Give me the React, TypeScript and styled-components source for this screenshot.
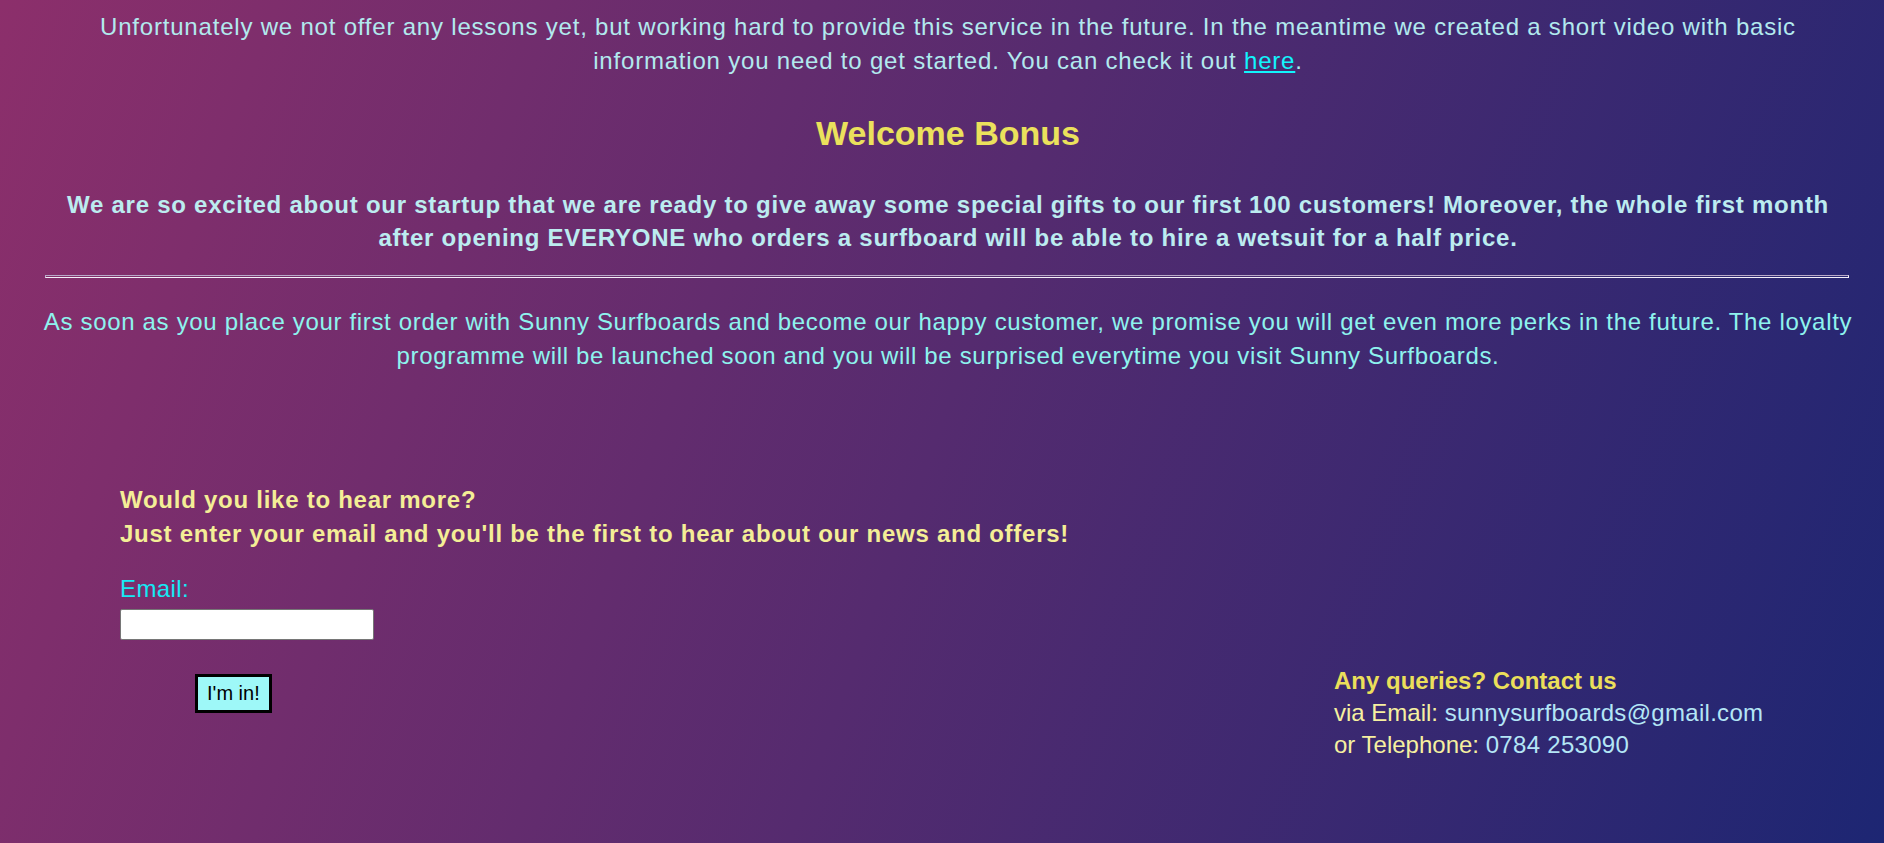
import React from "react";
import styled, { createGlobalStyle } from "styled-components";

const GlobalStyle = createGlobalStyle`
  html, body {
    margin: 0;
    padding: 0;
  }
  body {
    font-family: "Comic Sans MS", "Liberation Sans", Arial, sans-serif;
    background: #1d2673;
  }
`;

const Page = styled.main`
  min-height: 100vh;
  box-sizing: border-box;
  padding: 10px 30px 40px 42px;
  background: linear-gradient(110deg, #8c2f6b 0%, #552b6f 50%, #1d2673 100%);
  font-family: "Comic Sans MS", "Liberation Sans", Arial, sans-serif;
`;

const Paragraph = styled.p<{ $tone: "soft" | "aqua"; $gap?: number }>`
  margin: ${(p) => p.$gap ?? 0}px 0 0;
  font-size: 24px;
  line-height: 33.6px;
  letter-spacing: ${(p) => (p.$tone === "soft" ? 0.8 : 0.67)}px;
  text-align: center;
  color: ${(p) => (p.$tone === "soft" ? "#b2e9ee" : "#8ef3ee")};
`;

const Link = styled.a`
  color: #12f4fc;
  text-decoration: underline;
`;

const Heading = styled.h2`
  margin: 33px 0 0;
  font-size: 34px;
  line-height: 47.6px;
  font-weight: 700;
  text-align: center;
  color: #ebe15c;
`;

const Lead = styled.p`
  margin: 30px 0 0;
  font-size: 24px;
  line-height: 33.6px;
  font-weight: 700;
  letter-spacing: 0.75px;
  text-align: center;
  color: #bcecf0;
`;

const Divider = styled.hr`
  margin: 20px 5px 0 3px;
  height: 1px;
  border-style: solid;
  border-width: 1px;
  border-color: #b9aac8 #f4f0f8 #f4f0f8 #b9aac8;
  background: transparent;
`;

const Footer = styled.section`
  margin-top: 111px;
  padding-left: 78px;
  display: grid;
  grid-template-columns: 1214px auto;
  align-items: start;
`;

const SignupForm = styled.form`
  display: flex;
  flex-direction: column;
  align-items: flex-start;
`;

const Invite = styled.p`
  margin: 0;
  font-size: 24px;
  line-height: 33.6px;
  font-weight: 700;
  letter-spacing: 0.74px;
  color: #f4ee96;
`;

const Label = styled.label`
  margin-top: 22px;
  font-size: 24px;
  line-height: 33.6px;
  letter-spacing: 0.4px;
  color: #14e9f4;
`;

const EmailInput = styled.input`
  margin-top: 3px;
  width: 254px;
  height: 31px;
  box-sizing: border-box;
  border: 1px solid #767676;
  border-radius: 2px;
  background: #ffffff;
  padding: 0 4px;
`;

const SubmitButton = styled.button`
  margin: 34px 0 0 75px;
  height: 39px;
  box-sizing: border-box;
  padding: 0 9px;
  border: 3px solid #000000;
  border-radius: 0;
  background: #9ef8f8;
  color: #000000;
  font-family: "Liberation Sans", Arial, sans-serif;
  font-size: 20px;
  line-height: 23px;
  cursor: pointer;
`;

const Contact = styled.address`
  padding-top: 182px;
  font-style: normal;
  font-size: 24px;
  line-height: 32px;
  display: flex;
  flex-direction: column;
  white-space: nowrap;
`;

const ContactTitle = styled.strong`
  color: #ebdf5a;
  font-weight: 700;
`;

const ContactLine = styled.span`
  color: #f6f0a0;
`;

const ContactValue = styled.span`
  color: #b4e6f6;
  letter-spacing: 0.3px;
`;

export default function App() {
  return (
    <>
      <GlobalStyle />
      <Page>
        <Paragraph $tone="soft">
          Unfortunately we not offer any lessons yet, but working hard to provide this service in the future. In the
          meantime we created a short video with basic information you need to get started. You can check it out{" "}
          <Link href="#">here</Link>.
        </Paragraph>
        <Heading>Welcome Bonus</Heading>
        <Lead>
          We are so excited about our startup that we are ready to give away some special gifts to our first 100
          customers! Moreover, the whole first month after opening EVERYONE who orders a surfboard will be able to hire
          a wetsuit for a half price.
        </Lead>
        <Divider />
        <Paragraph $tone="aqua" $gap={27}>
          As soon as you place your first order with Sunny Surfboards and become our happy customer, we promise you will
          get even more perks in the future. The loyalty programme will be launched soon and you will be surprised
          everytime you visit Sunny Surfboards.
        </Paragraph>
        <Footer>
          <SignupForm onSubmit={(e) => e.preventDefault()}>
            <Invite>
              Would you like to hear more?
              <br />
              Just enter your email and you'll be the first to hear about our news and offers!
            </Invite>
            <Label htmlFor="email">Email:</Label>
            <EmailInput id="email" type="email" />
            <SubmitButton type="submit">I'm in!</SubmitButton>
          </SignupForm>
          <Contact>
            <ContactTitle>Any queries? Contact us</ContactTitle>
            <ContactLine>
              via Email: <ContactValue>sunnysurfboards@gmail.com</ContactValue>
            </ContactLine>
            <ContactLine>
              or Telephone: <ContactValue>0784 253090</ContactValue>
            </ContactLine>
          </Contact>
        </Footer>
      </Page>
    </>
  );
}
